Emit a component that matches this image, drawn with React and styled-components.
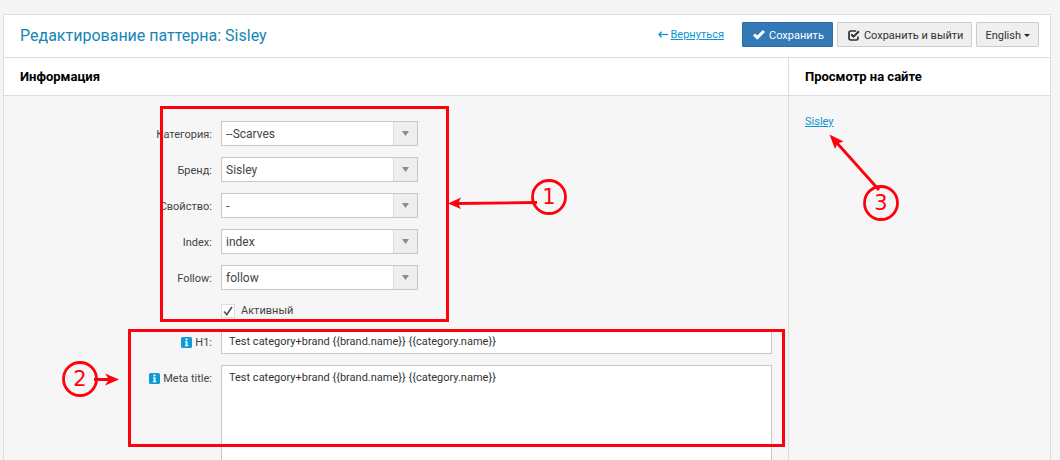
import styled, { createGlobalStyle } from "styled-components";

const selects = [
  { id: "category", label: "Категория:", value: "--Scarves" },
  { id: "brand", label: "Бренд:", value: "Sisley" },
  { id: "property", label: "Свойство:", value: "-" },
  { id: "index", label: "Index:", value: "index" },
  { id: "follow", label: "Follow:", value: "follow" },
];

const pattern = "Test category+brand {{brand.name}} {{category.name}}";

export default function App() {
  return (
    <>
      <GlobalStyle />
      <Panel>
        <Header>
          <Title>Редактирование паттерна: Sisley</Title>
          <Actions>
            <BackLink href="#back">
              <BackArrow />
              <span>Вернуться</span>
            </BackLink>
            <Button type="button" $primary>
              <CheckIcon />
              Сохранить
            </Button>
            <Button type="button">
              <CheckBoxIcon />
              Сохранить и выйти
            </Button>
            <LangButton type="button">
              English
              <Caret />
            </LangButton>
          </Actions>
        </Header>

        <Columns>
          <Main>
            <ColumnTitle>Информация</ColumnTitle>
            <Form>
              {selects.map((item) => (
                <Row key={item.id}>
                  <Label htmlFor={item.id}>{item.label}</Label>
                  <SelectBox>
                    <Select id={item.id} defaultValue={item.value}>
                      <option>{item.value}</option>
                    </Select>
                    <SelectArrow>
                      <svg width="7" height="5" viewBox="0 0 7 5">
                        <path d="M0 0h7L3.5 5z" fill="#8c8c8c" />
                      </svg>
                    </SelectArrow>
                  </SelectBox>
                </Row>
              ))}
              <CheckRow>
                <CheckLabel>
                  <Tick>
                    <input type="checkbox" defaultChecked />
                    <svg width="12" height="12" viewBox="0 0 12 12">
                      <path
                        d="M2 6.5 4.8 9.6 10 2"
                        fill="none"
                        stroke="#555"
                        strokeWidth="1.7"
                      />
                    </svg>
                  </Tick>
                  Активный
                </CheckLabel>
              </CheckRow>
              <Row>
                <Label htmlFor="h1">
                  <InfoIcon />
                  H1:
                </Label>
                <Input id="h1" type="text" defaultValue={pattern} />
              </Row>
              <Row>
                <Label htmlFor="metaTitle">
                  <InfoIcon />
                  Meta title:
                </Label>
                <TextArea id="metaTitle" defaultValue={pattern} />
              </Row>
            </Form>
          </Main>
          <Side>
            <ColumnTitle>Просмотр на сайте</ColumnTitle>
            <SideBody>
              <SideLink href="#sisley">Sisley</SideLink>
            </SideBody>
          </Side>
        </Columns>
      </Panel>
      <Notes />
    </>
  );
}

function BackArrow() {
  return (
    <svg width="10" height="7" viewBox="0 0 10 7" fill="none" stroke="#0d94d2">
      <path d="M10 3.5H1" strokeWidth="1.3" />
      <path d="M3.6.7.8 3.5l2.8 2.8" strokeWidth="1.3" />
    </svg>
  );
}

function CheckIcon() {
  return (
    <svg width="12" height="10" viewBox="0 0 12 10">
      <path d="M0 5.6 2 3.4l2.3 2.2L9.8 0 12 2.1 4.3 9.8z" fill="#fff" />
    </svg>
  );
}

function CheckBoxIcon() {
  return (
    <svg width="12" height="11" viewBox="0 0 12 11" fill="none" stroke="#333">
      <path
        d="M8.2 1H2.8A1.9 1.9 0 0 0 1 2.9v5.2A1.9 1.9 0 0 0 2.8 10h5.4A1.9 1.9 0 0 0 10 8.1V6.4"
        strokeWidth="1.7"
      />
      <path d="M3.2 4.3 5.5 6.6 11 1.2" strokeWidth="2" />
    </svg>
  );
}

function InfoIcon() {
  return (
    <svg width="11" height="11" viewBox="0 0 11 11">
      <rect width="11" height="11" rx="1.5" fill="#0f9bd3" />
      <path d="M4.5 1.6h2v1.7h-2zM4 4.3h2.5v4h.8v1H3.9v-1h.8V5.3H4z" fill="#fff" />
    </svg>
  );
}

// numbered callouts drawn over the form
function Notes() {
  return (
    <NotesLayer width="1060" height="460" viewBox="0 0 1060 460">
      <g fill="none" stroke="#ff000d" strokeWidth="3">
        <rect x="161.5" y="107.5" width="286" height="213" />
        <rect x="129.5" y="330.5" width="654" height="115" />
        <circle cx="549" cy="197" r="16.5" strokeWidth="2.8" />
        <circle cx="80" cy="379" r="16.5" strokeWidth="2.8" />
        <circle cx="881" cy="203" r="16.5" strokeWidth="2.8" />
        <path d="M537 202.5 456 203.5M94 379.5h16M879 190 837 143" strokeWidth="2.8" />
      </g>
      <g fill="#ff000d">
        <path d="M448 203.5 461 197.5 458 203.5 461 209z" />
        <path d="M119 379.5 105 373.5 109 379.5 105 385.5z" />
        <path d="M829.5 134.5 843.5 141.5 837.5 143.5 835 149z" />
      </g>
      <NoteText x="549" y="204">1</NoteText>
      <NoteText x="80" y="386">2</NoteText>
      <NoteText x="881" y="210">3</NoteText>
    </NotesLayer>
  );
}

const GlobalStyle = createGlobalStyle`
  * {
    box-sizing: border-box;
  }

  body {
    margin: 0;
    height: 100vh;
    overflow: hidden;
    background: #f5f5f5;
    color: #444;
    font-family: Roboto, "Liberation Sans", sans-serif;
    font-size: 11px;
  }

  svg {
    flex-shrink: 0;
  }
`;

const Panel = styled.div`
  margin: 14px 9px 0 3px;
  border: 1px solid #ddd;
  background: #f6f6f6;
`;

const Header = styled.header`
  display: flex;
  align-items: center;
  justify-content: space-between;
  height: 43px;
  padding: 0 11px 3px 16px;
  background: #fff;
  border-bottom: 1px solid #ddd;
`;

const Title = styled.h1`
  margin: 0;
  padding-top: 2px;
  font-size: 16px;
  font-weight: 400;
  color: #1585b5;
`;

const Actions = styled.div`
  display: flex;
  align-items: center;
  gap: 4px;
`;

const BackLink = styled.a`
  display: flex;
  align-items: center;
  gap: 3px;
  margin-right: 14px;
  color: #0d94d2;
  text-decoration: none;

  span {
    text-decoration: underline;
  }
`;

const Button = styled.button`
  display: flex;
  align-items: center;
  gap: 4px;
  height: 25px;
  padding: 1px 8px 0 10px;
  border: 1px solid ${(props) => (props.$primary ? "#2e6da4" : "#ccc")};
  border-radius: 1px;
  background: ${(props) => (props.$primary ? "#337ab7" : "#efefef")};
  color: ${(props) => (props.$primary ? "#fff" : "#333")};
  font-family: inherit;
  font-size: 11px;
  cursor: pointer;
`;

const LangButton = styled(Button)`
  gap: 3px;
  padding: 1px 8px 0;
`;

const Caret = styled.span`
  border-top: 3px solid #222;
  border-left: 3px solid transparent;
  border-right: 3px solid transparent;
`;

const Columns = styled.div`
  display: flex;
`;

const Main = styled.main`
  flex: 1;
  min-width: 0;
`;

const Side = styled.aside`
  width: 262px;
  border-left: 1px solid #ddd;
`;

const ColumnTitle = styled.h2`
  display: flex;
  align-items: center;
  height: 38px;
  margin: 0;
  padding: 0 16px;
  background: #fff;
  border-bottom: 1px solid #ddd;
  color: #000;
  font-size: 13px;
  font-weight: 700;
`;

const Form = styled.form`
  display: flex;
  flex-direction: column;
  gap: 11px;
  padding: 25px 16px 25px 0;
`;

const Row = styled.div`
  display: grid;
  grid-template-columns: 208px 1fr;
  column-gap: 9px;
`;

const Label = styled.label`
  display: flex;
  align-items: center;
  justify-content: flex-end;
  gap: 3px;
  height: 26px;
  margin-bottom: -1px;
`;

const SelectBox = styled.div`
  display: flex;
  width: 197px;
  height: 25px;
  border: 1px solid #c8c8c8;
  background: #fff;
`;

const Select = styled.select`
  flex: 1;
  min-width: 0;
  padding: 0 4px;
  border: none;
  appearance: none;
  background: transparent;
  color: #444;
  font-family: inherit;
  font-size: 12px;
`;

const SelectArrow = styled.span`
  display: flex;
  align-items: center;
  justify-content: center;
  width: 24px;
  border-left: 1px solid #ddd;
  background: #eee;
  pointer-events: none;
`;

const CheckRow = styled.div`
  display: flex;
  align-items: flex-end;
  height: 17px;
  padding-left: 217px;
`;

const CheckLabel = styled.label`
  display: flex;
  align-items: center;
  gap: 6px;
  line-height: 14px;
`;

const Tick = styled.span`
  display: grid;
  width: 14px;
  height: 14px;
  border: 1px solid #ddd;
  background: #fff;

  input,
  svg {
    grid-area: 1 / 1;
  }

  input {
    margin: 0;
    appearance: none;
  }

  svg {
    visibility: hidden;
    pointer-events: none;
  }

  input:checked + svg {
    visibility: visible;
  }
`;

const Input = styled.input`
  width: 100%;
  height: 25px;
  padding: 0 7px;
  border: 1px solid #c8c8c8;
  background: #fff;
  color: #333;
  font-family: inherit;
  font-size: 11px;
`;

const TextArea = styled.textarea`
  display: block;
  width: 100%;
  height: 130px;
  padding: 5px 7px;
  border: 1px solid #c8c8c8;
  background: #fff;
  color: #333;
  font-family: inherit;
  font-size: 11px;
  resize: none;
`;

const SideBody = styled.div`
  padding: 19px 16px;
`;

const SideLink = styled.a`
  color: #0d94d2;
`;

const NotesLayer = styled.svg`
  position: absolute;
  top: 0;
  left: 0;
  pointer-events: none;
`;

const NoteText = styled.text`
  fill: #ff000d;
  font-family: "DejaVu Sans", sans-serif;
  font-size: 21px;
  text-anchor: middle;
`;
